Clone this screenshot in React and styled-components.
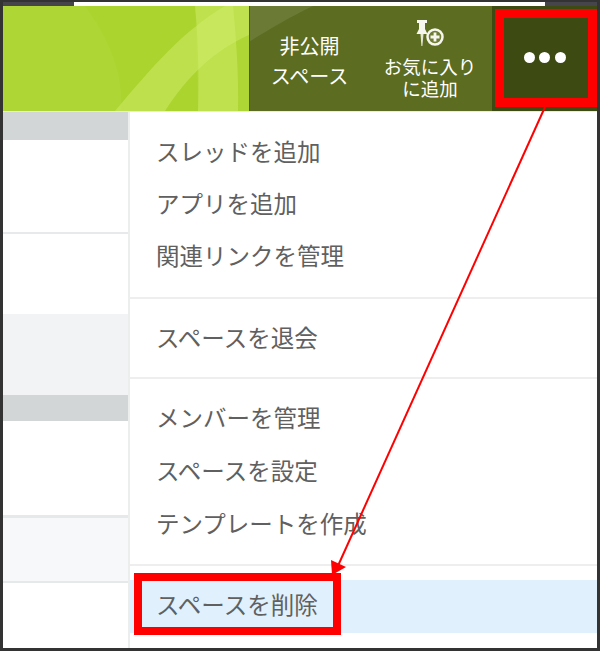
import React from 'react'
import styled, { createGlobalStyle } from 'styled-components'

const GlobalStyle = createGlobalStyle`
  html, body { margin: 0; padding: 0; background: #fff; }
  body { font-family: "Noto Sans CJK JP", "Noto Sans", sans-serif; }
`

const Frame = styled.div`
  position: relative;
  width: 600px;
  height: 651px;
  box-sizing: border-box;
  border: 3px solid #333333;
  border-top-width: 2px;
  display: flex;
  flex-direction: column;
  overflow: hidden;
  background: #fff;
`
const TopStrip = styled.div`
  height: 4px;
  flex: none;
  display: flex;
  background: #fff;
`
const StripEnd = styled.div`
  width: ${p => p.$w}px;
  background: #45454b;
`
const StripFill = styled.div`
  flex: 1;
  background: #fff;
`
const Header = styled.header`
  height: 105px;
  flex: none;
  display: flex;
  position: relative;
  background: #aed634;
  border-bottom: 1px solid #e6e8f2;
`
const Swoosh = styled.svg`
  position: absolute;
  inset: 0;
  width: 594px;
  height: 105px;
`
const HeaderSpacer = styled.div`
  width: 246px;
  flex: none;
`
const HeaderButton = styled.div`
  position: relative;
  width: ${p => p.$w}px;
  flex: none;
  display: flex;
  flex-direction: column;
  align-items: center;
  justify-content: ${p => (p.$top ? 'flex-start' : 'center')};
  padding: ${p => p.$pad || '0'};
  box-sizing: border-box;
  color: #fff;
  text-align: center;
  font-size: ${p => p.$size}px;
  line-height: ${p => p.$line}px;
`
const MoreButton = styled.div`
  position: relative;
  flex: 1;
  background: #3d4a12;
  display: flex;
  align-items: center;
  justify-content: center;
  gap: 4.5px;
  padding-bottom: 3px;
`
const Dot = styled.span`
  width: 11px;
  height: 11px;
  border-radius: 50%;
  background: #fff;
`
const PinIcon = styled.svg`
  width: 32px;
  height: 30px;
  flex: none;
  margin-bottom: 6px;
  margin-left: 2px;
`
const Body = styled.div`
  flex: 1;
  display: flex;
  min-height: 0;
`
const SideColumn = styled.div`
  width: 125px;
  flex: none;
  display: flex;
  flex-direction: column;
  border-right: 2px solid #eceeee;
`
const SideBlock = styled.div`
  height: ${p => p.$h}px;
  flex: none;
  background: ${p => p.$bg};
`
const Menu = styled.ul`
  flex: 1;
  margin: 0;
  padding: 13px 0 0;
  list-style: none;
  display: flex;
  flex-direction: column;
`
const MenuItem = styled.li`
  height: ${p => p.$h || 52}px;
  box-sizing: border-box;
  flex: none;
  display: flex;
  align-items: center;
  padding: 0 0 ${p => (p.$active ? 5 : 0)}px 26px;
  font-size: 23.5px;
  color: #606060;
  background: ${p => (p.$active ? '#e0f0fd' : 'transparent')};
`
const Divider = styled.li`
  height: 2px;
  flex: none;
  background: #eeeeee;
  margin: ${p => p.$before}px 0 ${p => p.$after}px;
`
const Highlight = styled.div`
  position: absolute;
  box-sizing: border-box;
  left: ${p => p.$x}px;
  top: ${p => p.$y}px;
  width: ${p => p.$w}px;
  height: ${p => p.$h}px;
  border: ${p => p.$b}px solid #ff0000;
`
const Arrow = styled.svg`
  position: absolute;
  left: -3px;
  top: -2px;
  width: 600px;
  height: 651px;
  pointer-events: none;
`

const App = () => {
  return (
    <Frame>
      <GlobalStyle />
      <TopStrip>
        <StripEnd $w={71} />
        <StripFill />
        <StripEnd $w={52} />
      </TopStrip>
      <Header>
        <Swoosh viewBox="0 0 594 105">
          <path d="M82 0 H192 L195 105 H118 C122 70 105 30 82 0 Z" fill="#abd42f" />
          <path d="M192 0 L230 0 C233 30 236 70 235 105 L195 105 C196 70 195 30 192 0 Z" fill="#d4f070" opacity="0.42" />
          <path d="M112 105 C150 60 180 25 222 0 L246 0 L246 29 C210 45 185 70 162 105 Z" fill="#d4f070" opacity="0.45" />
          <rect x="246" y="0" width="246" height="105" fill="#5c6c21" />
          <path d="M246 0 L310 0 C285 12 265 24 246 36 Z" fill="#6b7b35" />
          <rect x="246" y="0" width="1" height="105" fill="#505e1a" />
          <rect x="489" y="0" width="105" height="105" fill="#4d5a1a" />
        </Swoosh>
        <HeaderSpacer />
        <HeaderButton $w={119} $size={20} $line={30} $pad="4px 0 0 2px">
          <span>非公開</span>
          <span>スペース</span>
        </HeaderButton>
        <HeaderButton $w={124} $size={18.5} $line={22} $pad="13px 0 0" $top>
          <PinIcon viewBox="0 0 32 30">
            <path d="M2 1 H12 V4 H10 V10 L12.5 15 H1.5 L4 10 V4 H2 Z" fill="#f6f6ee" />
            <path d="M5.5 15 H8.5 L7.4 27 H6.4 Z" fill="#e4e6d6" />
            <circle cx="20" cy="18" r="7.5" fill="#6d7b36" stroke="#f6f6ee" strokeWidth="2.5" />
            <path d="M15.5 16.6 H18.6 V13.5 H21.4 V16.6 H24.5 V19.4 H21.4 V22.5 H18.6 V19.4 H15.5 Z" fill="#f6f6ee" />
          </PinIcon>
          <span>お気に入り</span>
          <span>に追加</span>
        </HeaderButton>
        <MoreButton>
          <Dot />
          <Dot />
          <Dot />
        </MoreButton>
      </Header>
      <Body>
        <SideColumn>
          <SideBlock $h={28} $bg="#d2d6d6" />
          <SideBlock $h={92} $bg="#ffffff" />
          <SideBlock $h={2} $bg="#e6eaea" />
          <SideBlock $h={80} $bg="#ffffff" />
          <SideBlock $h={81} $bg="#f2f3f5" />
          <SideBlock $h={26} $bg="#d2d6d6" />
          <SideBlock $h={94} $bg="#ffffff" />
          <SideBlock $h={3} $bg="#e6e9ea" />
          <SideBlock $h={63} $bg="#f7f8fa" />
          <SideBlock $h={2} $bg="#e6e9ea" />
          <SideBlock $h={65} $bg="#ffffff" />
        </SideColumn>
        <Menu>
          <MenuItem>スレッドを追加</MenuItem>
          <MenuItem>アプリを追加</MenuItem>
          <MenuItem>関連リンクを管理</MenuItem>
          <Divider $before={16} $after={12} />
          <MenuItem>スペースを退会</MenuItem>
          <Divider $before={14} $after={11} />
          <MenuItem $h={53}>メンバーを管理</MenuItem>
          <MenuItem $h={53}>スペースを設定</MenuItem>
          <MenuItem $h={53}>テンプレートを作成</MenuItem>
          <Divider $before={15} $after={14} />
          <MenuItem $h={53} $active>スペースを削除</MenuItem>
        </Menu>
      </Body>
      <Highlight $x={492} $y={7} $w={102} $h={98} $b={9} />
      <Highlight $x={131} $y={571} $w={207} $h={62} $b={8} />
      <Arrow viewBox="0 0 600 651">
        <line x1="545" y1="107" x2="337" y2="568" stroke="#ff0000" strokeWidth="2" />
        <polygon points="331,560 346,567 332,575" fill="#ff0000" />
      </Arrow>
    </Frame>
  )
}

export default App
